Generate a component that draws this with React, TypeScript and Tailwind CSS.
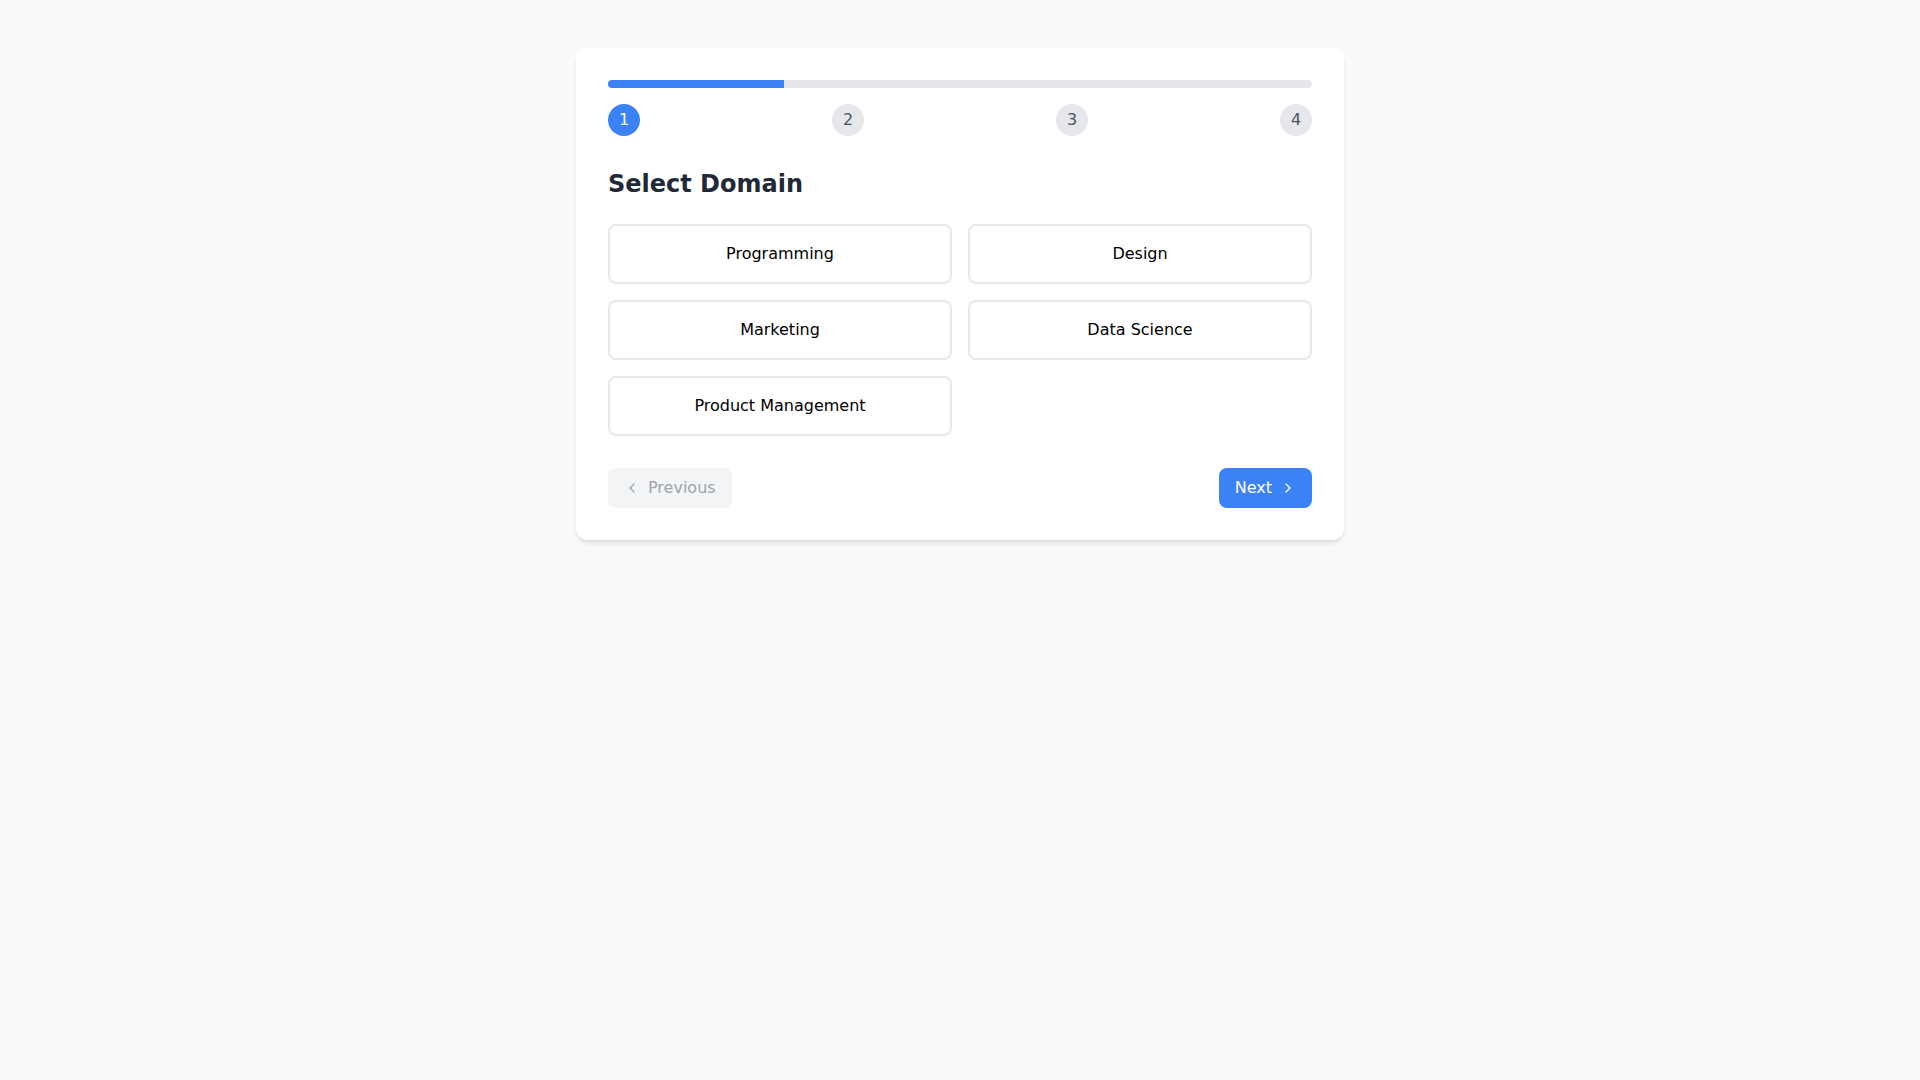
import { ChevronLeft, ChevronRight } from 'lucide-react'

const steps = [1, 2, 3, 4]
const domains = ['Programming', 'Design', 'Marketing', 'Data Science', 'Product Management']

export default function App() {
  const current = 1

  return (
    <div className="min-h-screen bg-[#f9fafb] pt-12 font-['DejaVu_Sans',sans-serif]">
      <div className="mx-auto max-w-3xl rounded-xl bg-white p-8 shadow-md">
        <div className="h-2 w-full overflow-hidden rounded-full bg-[#e5e7eb]">
          <div className="h-full bg-[#3b82f6]" style={{ width: `${(current / steps.length) * 100}%` }} />
        </div>
        <div className="mt-4 flex justify-between">
          {steps.map((s) => (
            <div
              key={s}
              className={`flex h-8 w-8 items-center justify-center rounded-full text-base ${
                s === current ? 'bg-[#3b82f6] text-white' : 'bg-[#e5e7eb] text-[#4b5563]'
              }`}
            >
              {s}
            </div>
          ))}
        </div>

        <h2 className="mt-8 mb-6 text-2xl font-bold text-[#1f2937]">Select Domain</h2>

        <div className="grid grid-cols-2 gap-4">
          {domains.map((d) => (
            <button
              key={d}
              className="rounded-lg border-2 border-[#e5e7eb] bg-white p-4 text-base text-black hover:border-[#93c5fd]"
            >
              {d}
            </button>
          ))}
        </div>

        <div className="mt-8 flex justify-between">
          <button
            disabled
            className="flex items-center gap-2 rounded-lg bg-[#f3f4f6] px-4 py-2 text-base text-[#9ca3af]"
          >
            <ChevronLeft size={16} />
            Previous
          </button>
          <button className="flex items-center gap-2 rounded-lg bg-[#3b82f6] px-4 py-2 text-base text-white hover:bg-[#2563eb]">
            Next
            <ChevronRight size={16} />
          </button>
        </div>
      </div>
    </div>
  )
}
